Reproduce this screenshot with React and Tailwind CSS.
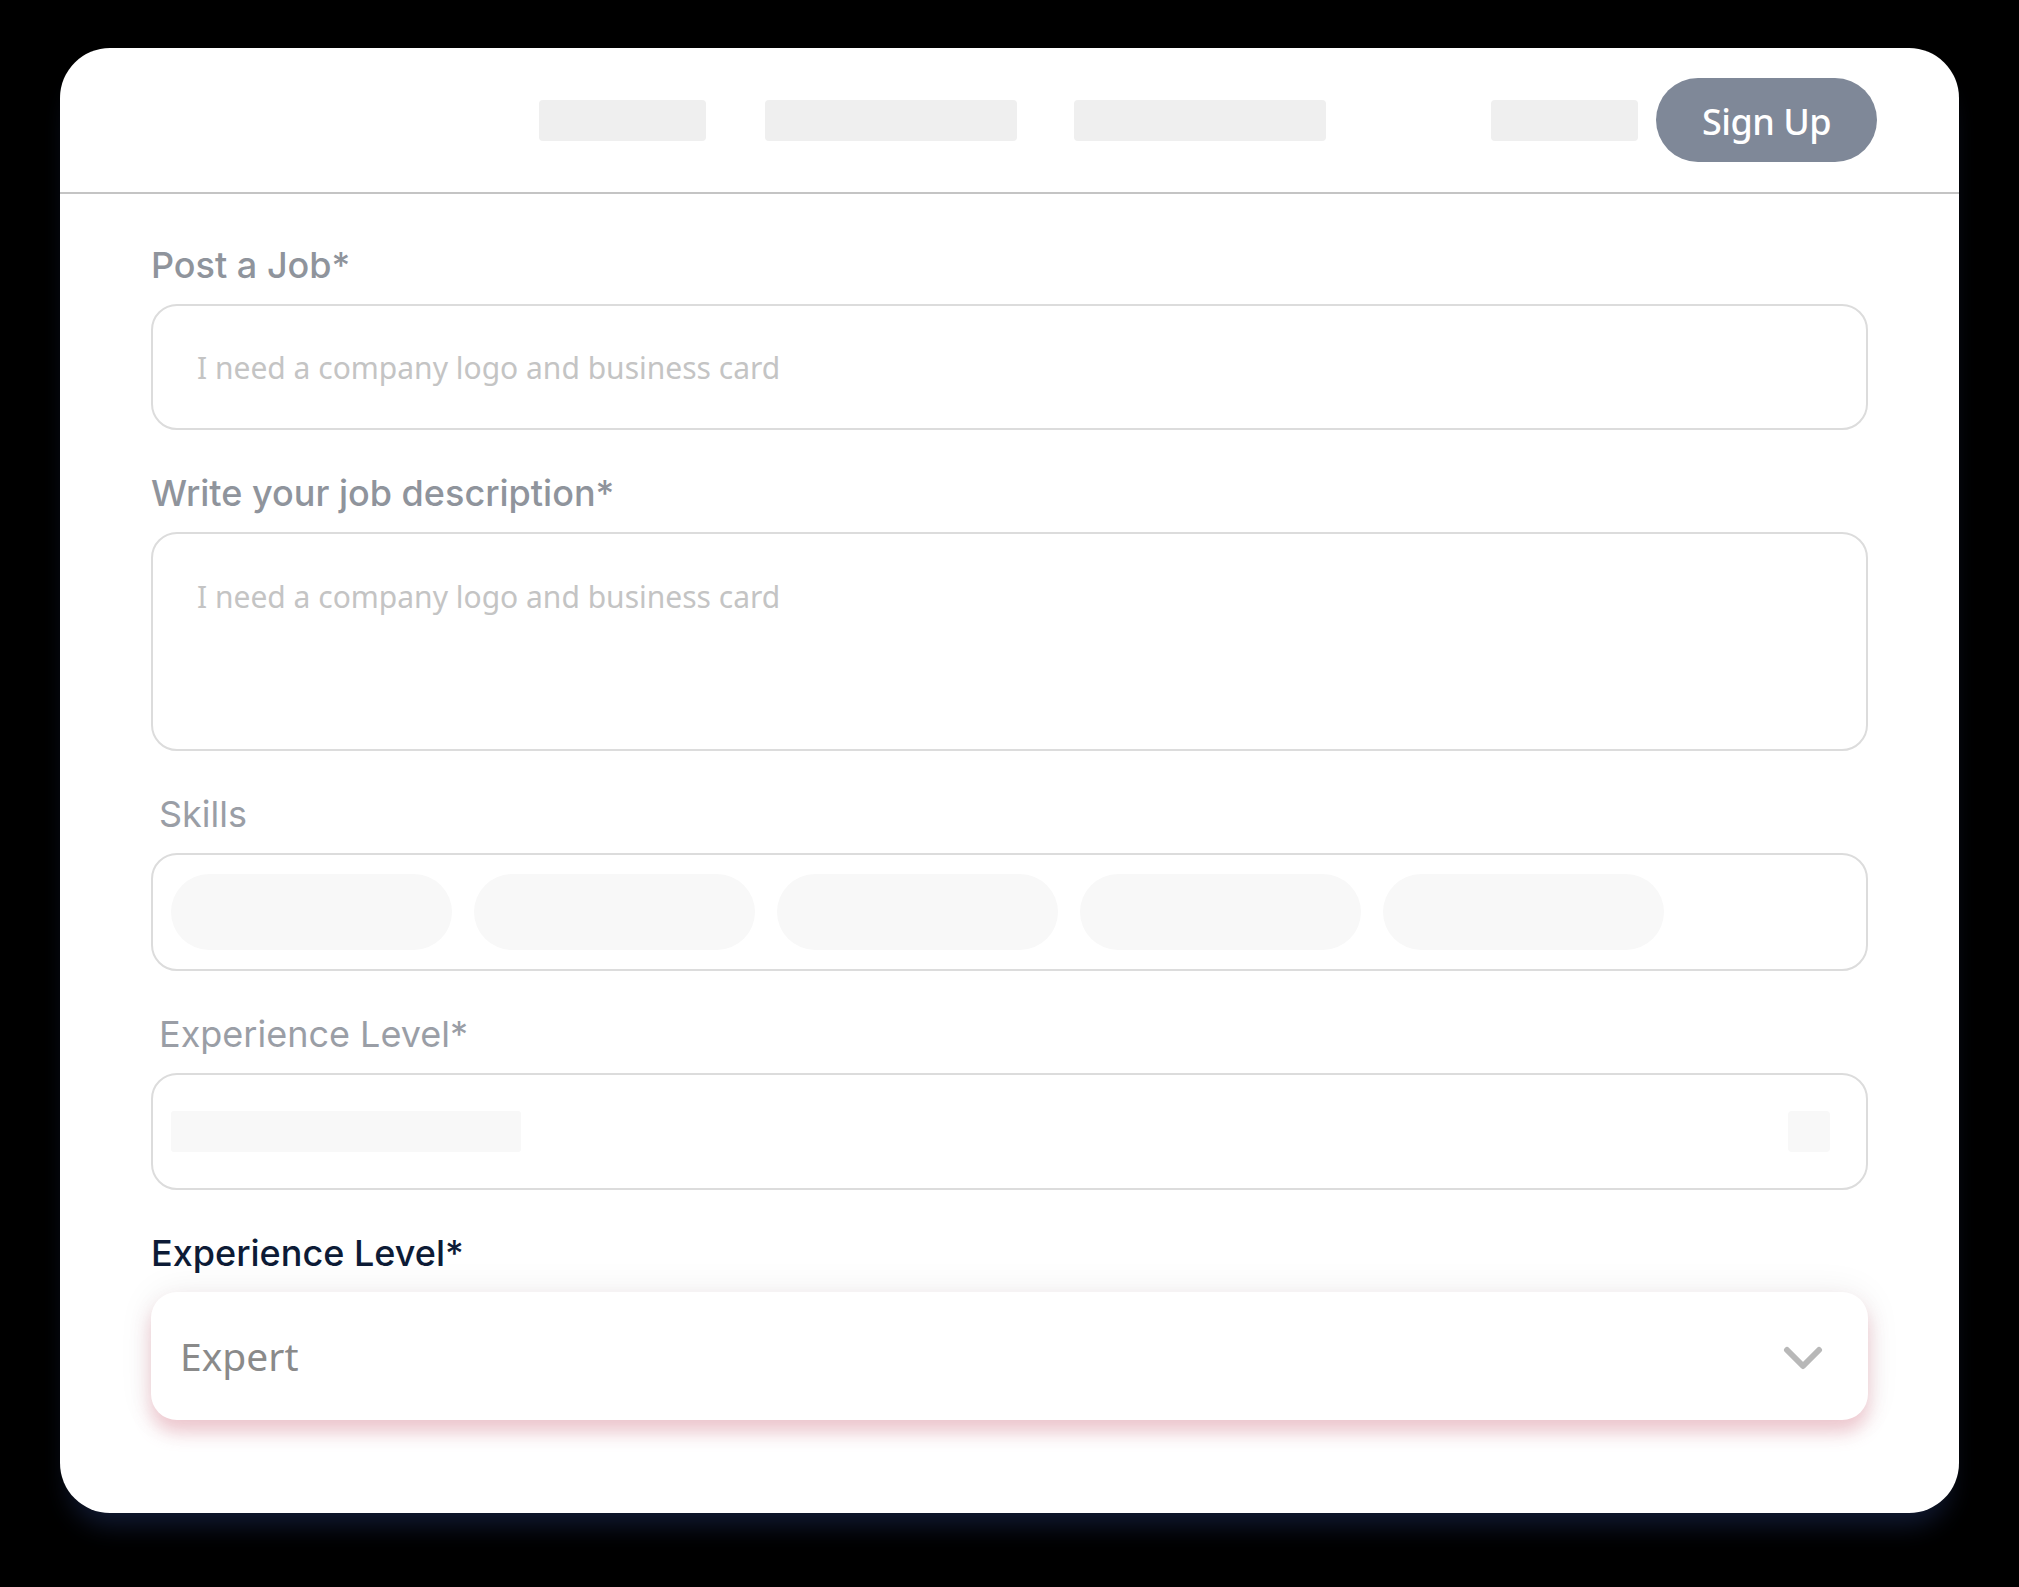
import React from "react";

const labelMuted = "block h-[44px] leading-[44px] text-[36px] font-medium text-[#8f949c]";

function Field({ label, labelClass, children, last }) {
  return (
    <div className={last ? "" : "mb-[41px]"}>
      <label className={`${labelClass} mb-[17px]`}>{label}</label>
      {children}
    </div>
  );
}

export default function App() {
  const pills = [0, 1, 2, 3, 4];

  return (
    <div className="w-full h-[1587px] bg-black pt-[48px] pl-[60px]" style={{ fontFamily: "Inter, 'Noto Sans', sans-serif" }}>
      <div className="w-[1899px] rounded-[50px] bg-white shadow-[0_22px_26px_-10px_rgba(20,30,60,0.85)] overflow-hidden">
        {/* top nav */}
        <header className="h-[146px] border-b-2 border-[#c4c4c4] flex items-center pl-[479px] pr-[82px]">
          <div className="h-[41px] w-[167px] rounded-[4px] bg-[#efefef]" />
          <div className="h-[41px] w-[252px] rounded-[4px] bg-[#efefef] ml-[59px]" />
          <div className="h-[41px] w-[252px] rounded-[4px] bg-[#efefef] ml-[57px]" />
          <div className="h-[41px] w-[147px] rounded-[4px] bg-[#efefef] ml-[165px]" />
          <button
            className="ml-[18px] h-[84px] w-[221px] rounded-full bg-[#7f8898] text-white text-[36px] font-medium tracking-[-0.5px] pt-[4px]"
            style={{ fontFamily: "'Noto Sans', sans-serif" }}
          >
            Sign Up
          </button>
        </header>

        {/* form */}
        <div className="px-[91px] pt-[49px] pb-[93px]">
          <Field label="Post a Job*" labelClass={labelMuted}>
            <div className="h-[126px] rounded-[26px] border-2 border-[#dcdcdc] flex items-center pl-[44px]">
              <span className="text-[30px] text-[#c4c4c4]" style={{ fontFamily: "'Noto Sans', sans-serif" }}>
                I need a company logo and business card
              </span>
            </div>
          </Field>

          <Field label="Write your job description*" labelClass={labelMuted}>
            <div className="h-[219px] rounded-[26px] border-2 border-[#dcdcdc] pl-[44px] pt-[42px]">
              <span className="block leading-[42px] text-[30px] text-[#c4c4c4]" style={{ fontFamily: "'Noto Sans', sans-serif" }}>
                I need a company logo and business card
              </span>
            </div>
          </Field>

          <Field label="Skills" labelClass={`${labelMuted} pl-[8px] !font-normal text-[#9a9ea6]`}>
            <div className="h-[118px] rounded-[26px] border-2 border-[#dcdcdc] flex items-center gap-[22px] pl-[18px]">
              {pills.map((p) => (
                <div key={p} className="h-[76px] w-[281px] rounded-[38px] bg-[#f8f8f8]" />
              ))}
            </div>
          </Field>

          <Field label="Experience Level*" labelClass={`${labelMuted} pl-[8px] !font-normal text-[#9a9ea6]`}>
            <div className="h-[117px] rounded-[26px] border-2 border-[#dcdcdc] flex items-center justify-between pl-[18px] pr-[36px]">
              <div className="h-[41px] w-[350px] rounded-[3px] bg-[#f8f8f8]" />
              <div className="h-[41px] w-[42px] rounded-[4px] bg-[#f8f8f8]" />
            </div>
          </Field>

          <Field last label="Experience Level*" labelClass="block h-[44px] leading-[44px] text-[36px] font-medium text-[#0d1b36]">
            <div className="h-[128px] rounded-[26px] bg-white flex items-center justify-between pl-[29px] pr-[45px] shadow-[0_12px_18px_rgba(225,140,155,0.45),0_0_36px_rgba(0,0,0,0.07)]">
              <span className="text-[39px] text-[#8a8a8a]" style={{ fontFamily: "'Noto Sans', sans-serif" }}>
                Expert
              </span>
              <svg width="40" height="26" viewBox="0 0 40 26" fill="none" className="mt-[4px]">
                <polyline points="4,5 20,21 36,5" stroke="#b8b8b8" strokeWidth="6" strokeLinecap="round" strokeLinejoin="round" />
              </svg>
            </div>
          </Field>
        </div>
      </div>
    </div>
  );
}
